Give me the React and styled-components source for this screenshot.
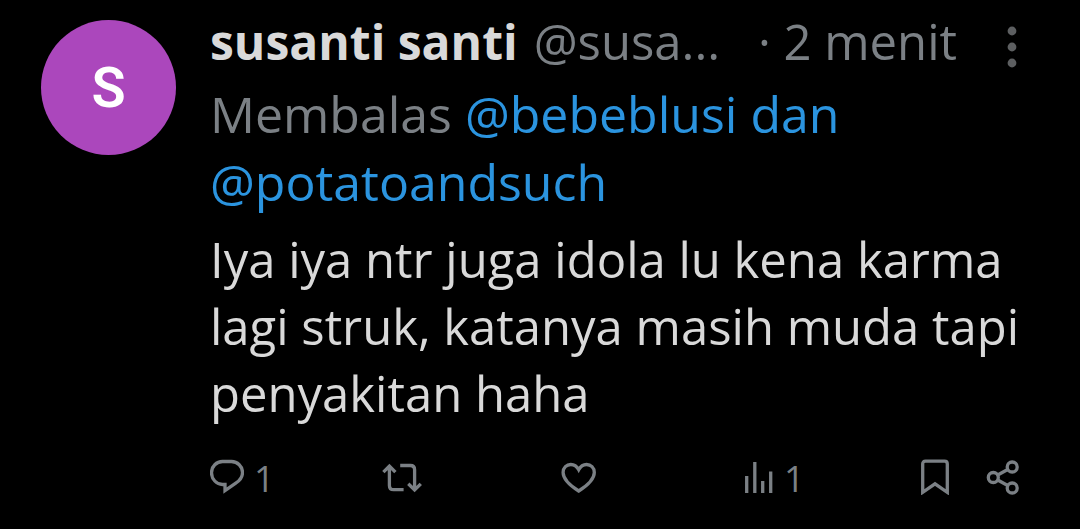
import React from "react";
import styled, { createGlobalStyle } from "styled-components";

const colors = {
  background: "#000000",
  text: "#d9d9d9",
  muted: "#7b8085",
  dots: "#5d5f61",
  link: "#2b94df",
  avatar: "#ab47bc",
};

export default function App() {
  return (
    <>
      <GlobalStyle />
      <Tweet>
        <Avatar href="#susanti">S</Avatar>
        <Content>
          <Header>
            <Name>susanti santi</Name>
            <Handle>@susa...</Handle>
            <Time>· 2 menit</Time>
            <MenuButton aria-label="Menu">
              <MenuIcon />
            </MenuButton>
          </Header>
          <Replying>
            Membalas{" "}
            <Mentions>
              <Mention href="#bebeblusi">@bebeblusi</Mention> dan{" "}
              <Mention href="#potatoandsuch">@potatoandsuch</Mention>
            </Mentions>
          </Replying>
          <Body>
            Iya iya ntr juga idola lu kena karma lagi struk, katanya masih muda
            tapi penyakitan haha
          </Body>
          <Actions>
            <ActionButton aria-label="Balas">
              <ReplyIcon />
              <Count>1</Count>
            </ActionButton>
            <ActionButton aria-label="Posting ulang">
              <RepostIcon />
            </ActionButton>
            <ActionButton aria-label="Suka">
              <HeartIcon />
            </ActionButton>
            <ActionButton aria-label="Tayangan">
              <ViewsIcon />
              <Count>1</Count>
            </ActionButton>
            <ActionButton aria-label="Markah">
              <BookmarkIcon />
            </ActionButton>
            <ActionButton aria-label="Bagikan">
              <ShareIcon />
            </ActionButton>
          </Actions>
        </Content>
      </Tweet>
    </>
  );
}

const MenuIcon = () => (
  <svg width="10" height="42" viewBox="0 0 10 42" fill="currentColor">
    <circle cx="5" cy="5" r="4.4" />
    <circle cx="5" cy="21" r="4.4" />
    <circle cx="5" cy="37" r="4.4" />
  </svg>
);

const ReplyIcon = () => (
  <Icon width="34" height="36" viewBox="0 0 34 36">
    <path d="M12.5 2.5h9c6 0 11 4.900 11 11 0 4.500-2.600 8-6.400 10.300L15 31.500v-6h-2.500c-6 0-11-5.400-11-11.800 0-6.200 5-11.200 11-11.200z" />
  </Icon>
);

const RepostIcon = () => (
  <Icon width="40" height="36" viewBox="0 0 40 36">
    <path d="M1.400 13.200L7.400 7l6 6.200M7.400 7.500v19c0 2.800 1.600 4.200 4.200 4.200h10M18.200 6.500h10.200c2.700 0 4.200 1.500 4.200 4.200v20M26.300 24.800l6.300 6.200 6.200-6.200" />
  </Icon>
);

const HeartIcon = () => (
  <Icon width="36" height="36" viewBox="0 0 36 36">
    <path d="M17.700 32C9 26.500 2.100 20.500 2.100 13.500 2.100 8.600 5.600 5.500 9.800 5.500c3.300 0 6.100 1.900 7.900 5.200 1.800-3.300 4.600-5.200 7.900-5.200 4.200 0 7.700 3.100 7.700 8 0 7-6.900 13-15.600 18.500z" />
  </Icon>
);

const ViewsIcon = () => (
  <Icon width="30" height="36" viewBox="0 0 30 36">
    <path d="M2.700 34V17M10.800 34V3M18.700 34V22M26.700 34V12.500" />
  </Icon>
);

const BookmarkIcon = () => (
  <Icon width="28" height="36" viewBox="0 0 28 36">
    <path d="M1.700 33.300V5c0-1.800 1-2.800 2.800-2.800h19c1.800 0 2.800 1 2.800 2.800v28.300L14 24.800z" />
  </Icon>
);

const ShareIcon = () => (
  <Icon width="34" height="36" viewBox="0 0 34 36">
    <circle cx="7.300" cy="18.500" r="5" />
    <circle cx="26.200" cy="8" r="5" />
    <circle cx="26.200" cy="29" r="5" />
    <path d="M11.700 16l10-5.500M11.700 21l10 5.500" />
  </Icon>
);

const GlobalStyle = createGlobalStyle`
  * {
    box-sizing: border-box;
  }

  body {
    margin: 0;
    background: ${colors.background};
    color: ${colors.text};
    font-family: "Open Sans", "Noto Sans", sans-serif;
    font-size: 49px;
  }

  a {
    color: inherit;
    text-decoration: none;
  }

  button {
    padding: 0;
    border: 0;
    background: none;
    color: inherit;
    font: inherit;
    cursor: pointer;
  }
`;

const Tweet = styled.article`
  display: flex;
  align-items: flex-start;
  gap: 34px;
  padding: 7px 60px 28px 41px;
`;

const Avatar = styled.a`
  display: flex;
  flex: none;
  align-items: center;
  justify-content: center;
  width: 135px;
  height: 135px;
  margin-top: 13px;
  border-radius: 50%;
  background: ${colors.avatar};
  color: white;
  font-family: Roboto, sans-serif;
  font-size: 56px;
  font-weight: 600;
`;

const Content = styled.div`
  flex: 1;
  min-width: 0;
`;

const Header = styled.header`
  display: flex;
  align-items: center;
  height: 68px;
  color: ${colors.muted};
  white-space: nowrap;
`;

const Name = styled.span`
  margin-right: 16px;
  color: ${colors.text};
  font-size: 48px;
  font-weight: 700;
`;

const Handle = styled.span`
  flex: 1;
`;

const Time = styled.span`
  margin-right: 50px;
`;

const MenuButton = styled.button`
  display: flex;
  margin-right: 3px;
  padding-top: 12px;
  color: ${colors.dots};
`;

const Replying = styled.div`
  margin-top: 5px;
  color: ${colors.muted};
  font-size: 50px;
  line-height: 68px;
`;

const Mentions = styled.span`
  color: ${colors.link};
`;

const Mention = styled.a`
  &:hover {
    text-decoration: underline;
  }
`;

const Body = styled.p`
  margin: 10px 0 0;
  line-height: 67px;
`;

const Actions = styled.div`
  display: grid;
  grid-template-columns: 172fr 179fr 183fr 177fr 65fr auto;
  margin-top: 30px;
  color: ${colors.muted};
`;

const ActionButton = styled.button`
  display: flex;
  align-items: center;
  gap: 10px;
  height: 40px;
`;

const Count = styled.span`
  padding-top: 4px;
  font-size: 36px;
  line-height: 40px;
`;

const Icon = styled.svg`
  flex: none;
  fill: none;
  stroke: currentColor;
  stroke-width: 3.3;
`;
